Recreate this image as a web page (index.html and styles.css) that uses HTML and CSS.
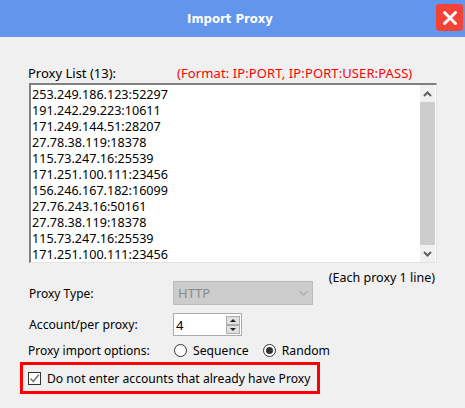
FILE: index.html

```html
<!DOCTYPE html>
<html lang="en">
<head>
  <meta charset="UTF-8">
  <title>Import Proxy</title>
  <link rel="stylesheet" href="styles.css">
</head>
<body>
  <div class="titlebar">
    <span class="title">Import Proxy</span>
    <button class="close" aria-label="Close">
      <svg width="16" height="16" viewBox="0 0 16 16"><path d="M2.5 2.5 L13.5 13.5 M13.5 2.5 L2.5 13.5" stroke="#fff" stroke-width="3" stroke-linecap="round"/></svg>
    </button>
  </div>
  <div class="content">
    <div class="list-head">
      <span class="list-label">Proxy List (13):</span>
      <span class="format">(Format: IP:PORT, IP:PORT:USER:PASS)</span>
    </div>
    <div class="listbox">
      <div class="lines">
        <div>253.249.186.123:52297</div>
        <div>191.242.29.223:10611</div>
        <div>171.249.144.51:28207</div>
        <div>27.78.38.119:18378</div>
        <div>115.73.247.16:25539</div>
        <div>171.251.100.111:23456</div>
        <div>156.246.167.182:16099</div>
        <div>27.76.243.16:50161</div>
        <div>27.78.38.119:18378</div>
        <div>115.73.247.16:25539</div>
        <div>171.251.100.111:23456</div>
      </div>
      <div class="scrollbar">
        <svg class="arrow" width="9" height="6" viewBox="0 0 9 6"><path d="M1 5 L4.5 1.5 L8 5" fill="none" stroke="#606060" stroke-width="2"/></svg>
        <div class="thumb"></div>
        <svg class="arrow" width="9" height="6" viewBox="0 0 9 6"><path d="M1 1 L4.5 4.5 L8 1" fill="none" stroke="#606060" stroke-width="2"/></svg>
      </div>
    </div>
    <div class="hint">(Each proxy 1 line)</div>
    <div class="row row-type">
      <span class="row-label">Proxy Type:</span>
      <div class="select">
        <span>HTTP</span>
        <svg width="9" height="6" viewBox="0 0 9 6"><path d="M0.5 1 L4.5 5 L8.5 1" fill="none" stroke="#b0b0b0" stroke-width="1.5"/></svg>
      </div>
    </div>
    <div class="row row-account">
      <span class="row-label">Account/per proxy:</span>
      <div class="spin">
        <span class="spin-value">4</span>
        <div class="spin-buttons">
          <div class="spin-btn"><i class="tri up"></i></div>
          <div class="spin-btn"><i class="tri down"></i></div>
        </div>
      </div>
    </div>
    <div class="row row-options">
      <span class="row-label">Proxy import options:</span>
      <div class="radios">
        <span class="radio-item"><i class="radio"></i>Sequence</span>
        <span class="radio-item"><i class="radio on"></i>Random</span>
      </div>
    </div>
    <div class="highlight">
      <span class="checkbox">
        <svg width="11" height="11" viewBox="0 0 11 11"><path d="M1.5 5.5 L4.3 8.5 L9.8 1.8" fill="none" stroke="#777" stroke-width="1.5"/></svg>
      </span>
      <span class="highlight-text">Do not enter accounts that already have Proxy</span>
    </div>
  </div>
</body>
</html>
```

FILE: styles.css

```css
body {
  margin: 0;
  width: 465px;
  height: 408px;
  overflow: hidden;
  background: #f0f0f0;
  color: #000;
  font-family: "Noto Sans", "DejaVu Sans", sans-serif;
  font-size: 12px;
}

.titlebar {
  height: 37px;
  background: #6495ed;
  display: flex;
  align-items: center;
  justify-content: center;
  padding-right: 5px;
  position: relative;
}

.title {
  color: #fff;
  font-family: "DejaVu Sans", sans-serif;
  font-size: 11.7px;
  font-weight: bold;
}

.close {
  position: absolute;
  top: 4px;
  right: 2px;
  width: 27px;
  height: 27px;
  padding: 0;
  border: none;
  border-radius: 3px;
  background: #f44336;
  display: flex;
  align-items: center;
  justify-content: center;
}

.content {
  padding: 28px 28px 0 20px;
}

.list-head {
  display: flex;
  height: 18px;
  line-height: 16px;
  padding-left: 8px;
  font-size: 13px;
}

.list-label {
  width: 149px;
}

.format {
  color: #f00;
  letter-spacing: 0.1px;
}

.listbox {
  display: flex;
  justify-content: space-between;
  height: 180px;
  margin-left: 9px;
  box-sizing: border-box;
  background: #fff;
  border: 1px solid #e3e3e3;
  border-top: 2px solid #808080;
  border-left: 2px solid #808080;
}

.lines {
  padding: 2px 0 0 1px;
  line-height: 16px;
  font-size: 12.6px;
}

.scrollbar {
  width: 15px;
  margin-right: 1px;
  background: #f0f0f0;
  display: flex;
  flex-direction: column;
  align-items: center;
  justify-content: space-between;
}

.arrow {
  margin: 6px 0 5px;
}

.thumb {
  width: 15px;
  flex: 1;
  background: #cdcdcd;
}

.hint {
  text-align: right;
  height: 17px;
  line-height: 16px;
  margin-top: 7px;
  padding-right: 2px;
  font-size: 12.5px;
}

.row {
  display: flex;
  align-items: center;
  padding-left: 9px;
}

.row-label {
  width: 144px;
}

.row-type {
  height: 24px;
  margin-top: -6px;
}

.select {
  width: 140px;
  height: 24px;
  box-sizing: border-box;
  background: #cccccc;
  border: 1px solid #bcbcbc;
  color: #8a8a8a;
  font-size: 13px;
  display: flex;
  align-items: center;
  justify-content: space-between;
  padding: 0 4px 0 4px;
}

.row-account {
  height: 23px;
  margin-top: 8px;
}

.row-account .row-label {
  font-size: 12.2px;
}

.spin {
  width: 69px;
  height: 23px;
  box-sizing: border-box;
  background: #fff;
  border: 1px solid #ababab;
  display: flex;
  justify-content: space-between;
  align-items: center;
  padding: 0 1px 0 2px;
}

.spin-value {
  font-size: 13px;
}

.spin-buttons {
  display: flex;
  flex-direction: column;
}

.spin-btn {
  width: 14px;
  height: 9px;
  box-sizing: border-box;
  background: #e1e1e1;
  border: 1px solid #adadad;
  display: flex;
  align-items: center;
  justify-content: center;
}

.tri {
  width: 0;
  height: 0;
  border-left: 3px solid transparent;
  border-right: 3px solid transparent;
}

.tri.up {
  border-bottom: 3px solid #222;
}

.tri.down {
  border-top: 3px solid #222;
}

.row-options {
  height: 17px;
  margin-top: 6px;
  padding-left: 8px;
}

.radios {
  display: flex;
  gap: 14px;
  padding-left: 2px;
}

.radio-item {
  display: flex;
  align-items: center;
  gap: 6px;
  font-size: 12.2px;
}

.radio {
  width: 13px;
  height: 13px;
  box-sizing: border-box;
  border: 1px solid #333;
  border-radius: 50%;
  background: #fff;
  display: flex;
  align-items: center;
  justify-content: center;
}

.radio.on::after {
  content: "";
  width: 7px;
  height: 7px;
  border-radius: 50%;
  background: #333;
}

.highlight {
  width: 300px;
  height: 32px;
  box-sizing: border-box;
  margin-top: 3px;
  border: 3px solid #f00;
  display: flex;
  align-items: center;
  gap: 6px;
  padding-left: 5px;
}

.highlight-text {
  font-size: 12.15px;
}

.checkbox {
  width: 13px;
  height: 13px;
  box-sizing: border-box;
  border: 1px solid #333;
  background: #fff;
  display: flex;
  align-items: center;
  justify-content: center;
}
```
